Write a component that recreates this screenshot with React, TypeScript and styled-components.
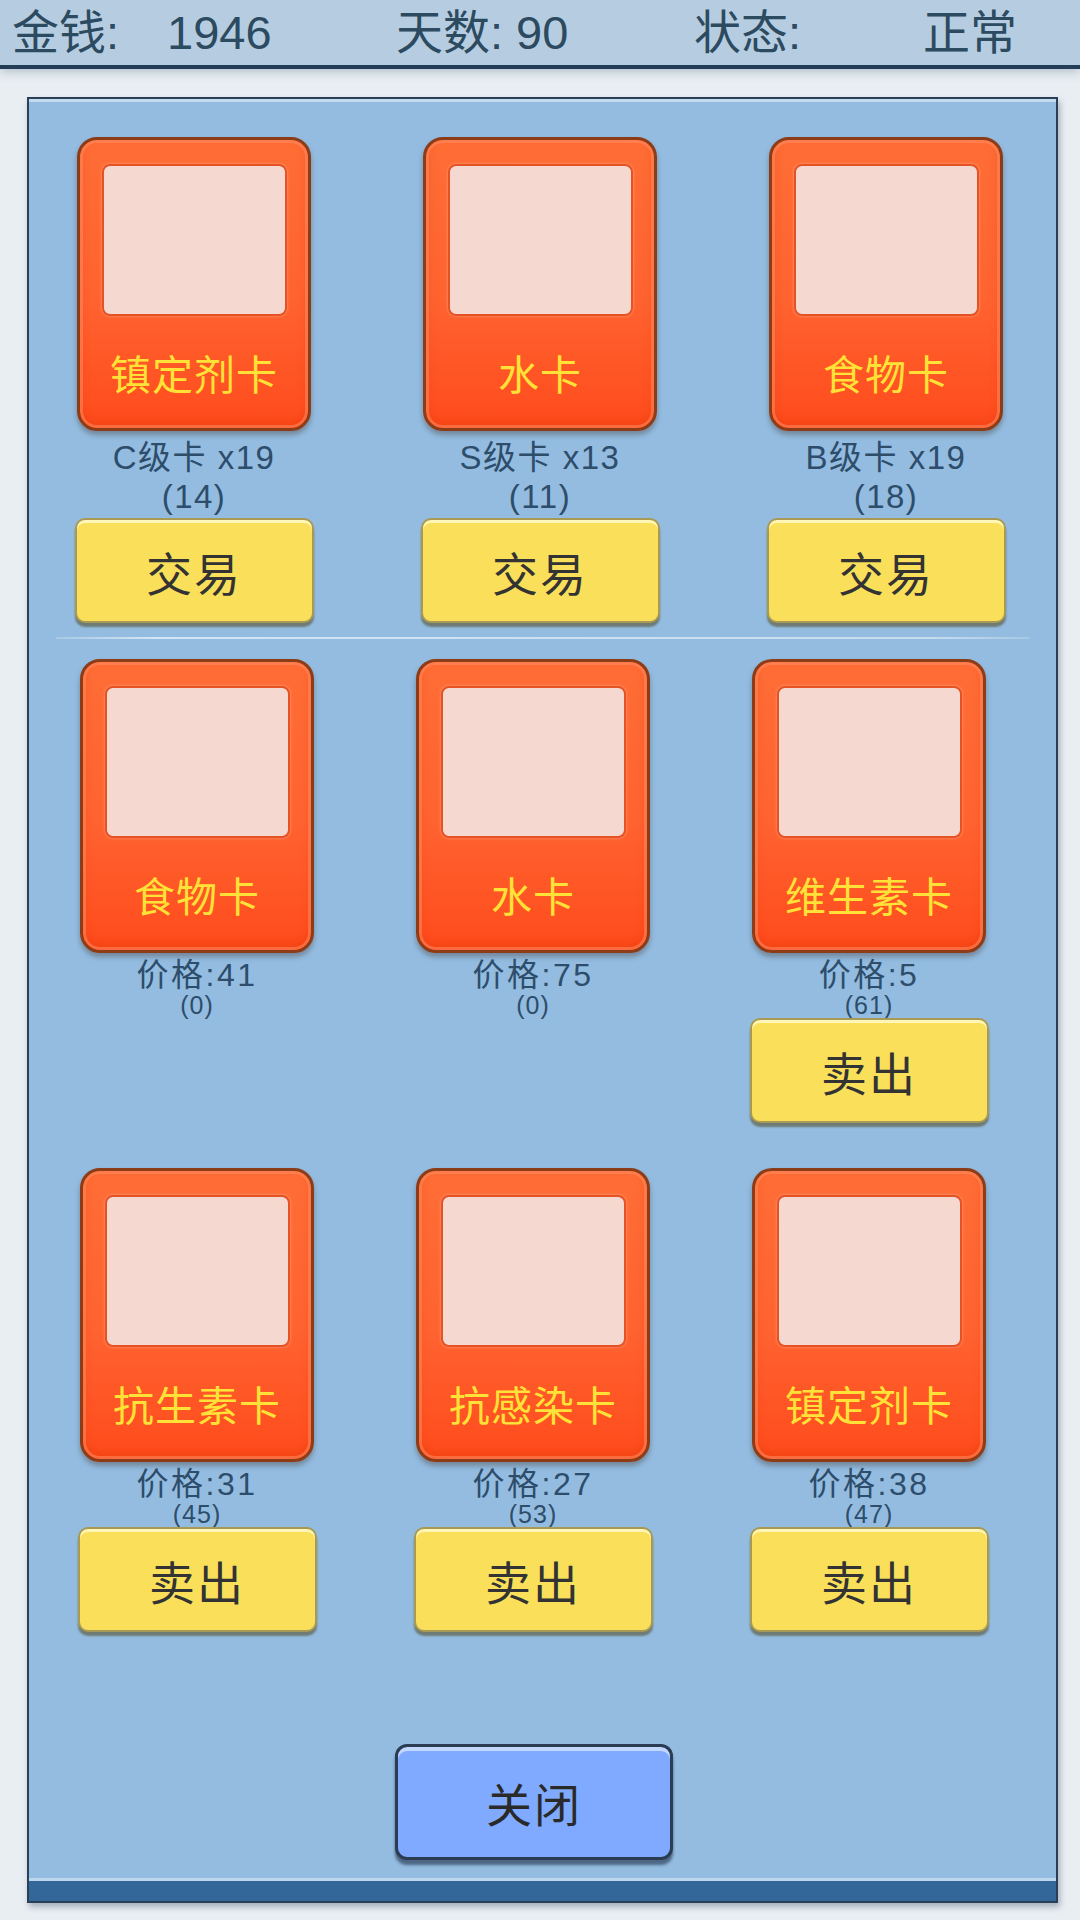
import styled, { createGlobalStyle } from "styled-components";

const GlobalStyle = createGlobalStyle`
  html, body {
    margin: 0;
    padding: 0;
    background: #e9eef3;
  }
  body {
    font-family: "Liberation Sans", "Noto Sans CJK SC", sans-serif;
  }
`;

type TradeItem = { name: string; grade: string; count: number; hold: number };
type SellItem = { name: string; price: number; hold: number; canSell: boolean };

const tradeItems: TradeItem[] = [
  { name: "镇定剂卡", grade: "C级卡", count: 19, hold: 14 },
  { name: "水卡", grade: "S级卡", count: 13, hold: 11 },
  { name: "食物卡", grade: "B级卡", count: 19, hold: 18 },
];

const sellItems: SellItem[] = [
  { name: "食物卡", price: 41, hold: 0, canSell: false },
  { name: "水卡", price: 75, hold: 0, canSell: false },
  { name: "维生素卡", price: 5, hold: 61, canSell: true },
  { name: "抗生素卡", price: 31, hold: 45, canSell: true },
  { name: "抗感染卡", price: 27, hold: 53, canSell: true },
  { name: "镇定剂卡", price: 38, hold: 47, canSell: true },
];

const Card = ({ name }: { name: string }) => (
  <SCard>
    <div className="art" />
    <div className="label">{name}</div>
  </SCard>
);

const App = () => {
  return (
    <>
      <GlobalStyle />
      <SPage>
        <SHeader>
          <span>金钱:</span>
          <span>1946</span>
          <span>天数: 90</span>
          <span>状态:</span>
          <span>正常</span>
        </SHeader>
        <SPanel>
          <SGrid $col={346} $offset={-8}>
            {tradeItems.map((it) => (
              <SSlot key={it.name}>
                <Card name={it.name} />
                <STradeInfo>
                  <div>
                    {it.grade} x{it.count}
                  </div>
                  <div>({it.hold})</div>
                </STradeInfo>
                <SButton>交易</SButton>
              </SSlot>
            ))}
          </SGrid>
          <SDivider />
          <SGrid $col={336} $offset={0} $rowGap={43}>
            {sellItems.map((it, i) => (
              <SSlot key={i}>
                <Card name={it.name} />
                <SPrice>价格:{it.price}</SPrice>
                <SHold>({it.hold})</SHold>
                {it.canSell ? (
                  <SButton $top={-1}>卖出</SButton>
                ) : (
                  <SButtonSpace />
                )}
              </SSlot>
            ))}
          </SGrid>
          <SClose>关闭</SClose>
          <SBand />
        </SPanel>
      </SPage>
    </>
  );
};
export default App;

const SPage = styled.div`
  width: 1080px;
  height: 1920px;
  overflow: hidden;
  background: #e9eef3;
`;

const SHeader = styled.div`
  height: 69px;
  box-sizing: border-box;
  background: #b6cde1;
  border-bottom: 4px solid #243d56;
  box-shadow: 0 3px 10px rgba(60, 90, 120, 0.3);
  display: grid;
  grid-template-columns: 155px 229px 298px 229px 1fr;
  align-items: center;
  padding-left: 12px;
  font-size: 47px;
  color: #2c4a60;
  line-height: 1;
  position: relative;
`;

const SPanel = styled.div`
  margin: 28px 0 0 27px;
  width: 1031px;
  height: 1806px;
  box-sizing: border-box;
  background: #93bce0;
  border: 2px solid #2a4058;
  box-shadow: inset 0 3px 0 #c4dbef, 2px 4px 6px rgba(40, 60, 80, 0.35);
  display: flex;
  flex-direction: column;
  padding-top: 38px;
`;

const SGrid = styled.div<{ $col: number; $offset: number; $rowGap?: number }>`
  display: grid;
  grid-template-columns: repeat(3, ${(p) => p.$col}px);
  margin-left: ${(p) => p.$offset}px;
  row-gap: ${(p) => p.$rowGap ?? 0}px;
`;

const SSlot = styled.div`
  display: flex;
  flex-direction: column;
  align-items: center;
`;

const SCard = styled.div`
  width: 234px;
  height: 294px;
  box-sizing: border-box;
  border: 3px solid #8c3d17;
  border-radius: 20px;
  background: linear-gradient(180deg, #ff6d35 0%, #ff6330 55%, #ff4b1c 100%);
  box-shadow: inset 0 0 0 3px rgba(255, 140, 100, 0.55),
    inset 0 -6px 10px rgba(230, 60, 10, 0.5), 0 4px 5px rgba(60, 40, 30, 0.35);
  display: flex;
  flex-direction: column;
  align-items: center;
  padding-top: 24px;
  .art {
    width: 185px;
    height: 152px;
    box-sizing: border-box;
    border: 2px solid #e45226;
    border-radius: 8px;
    background: #f5d8cf;
    box-shadow: 0 0 3px rgba(255, 170, 130, 0.9);
  }
  .label {
    margin-top: 32px;
    font-family: "Noto Sans CJK SC", sans-serif;
    font-size: 41px;
    line-height: 48px;
    letter-spacing: 1px;
    color: #ffe238;
  }
`;

const STradeInfo = styled.div`
  margin-top: 7px;
  font-size: 33px;
  line-height: 39px;
  letter-spacing: 1.5px;
  color: #2d4d6b;
  text-align: center;
`;

const SPrice = styled.div`
  margin-top: 5px;
  font-size: 32px;
  line-height: 34px;
  letter-spacing: 2.5px;
  color: #2d4d6b;
`;

const SHold = styled.div`
  font-size: 25px;
  line-height: 27px;
  letter-spacing: 1px;
  color: #2d4d6b;
`;

const SButton = styled.div<{ $top?: number }>`
  margin-top: ${(p) => p.$top ?? 2}px;
  margin-bottom: 2px;
  width: 239px;
  height: 105px;
  box-sizing: border-box;
  border-radius: 10px;
  background: #fae05a;
  border: 2px solid #a89a55;
  box-shadow: inset 0 3px 0 #fff6b8, 0 4px 2px rgba(80, 70, 30, 0.55);
  display: flex;
  align-items: center;
  justify-content: center;
  font-family: "Noto Sans CJK SC", sans-serif;
  font-size: 46px;
  letter-spacing: 2px;
  color: #333333;
`;

const SButtonSpace = styled.div`
  height: 106px;
`;

const SDivider = styled.div`
  margin: 12px 27px 20px 27px;
  height: 2px;
  background: linear-gradient(90deg, #a8c8e4, #d4e6f5 10%, #c6dcf0 90%, #a8c8e4);
`;

const SClose = styled.div`
  align-self: flex-start;
  margin: 110px 0 0 366px;
  width: 278px;
  height: 116px;
  box-sizing: border-box;
  border-radius: 12px;
  background: #7faaff;
  border: 3px solid #2c3c52;
  box-shadow: inset 0 4px 0 #c4d8ff, 0 5px 3px rgba(30, 45, 70, 0.6);
  display: flex;
  align-items: center;
  justify-content: center;
  font-family: "Noto Sans CJK SC", sans-serif;
  font-size: 46px;
  letter-spacing: 2px;
  color: #2a2a2a;
`;

const SBand = styled.div`
  margin-top: auto;
  height: 20px;
  background: #336699;
  border-top: 3px solid #bcd6ee;
`;
